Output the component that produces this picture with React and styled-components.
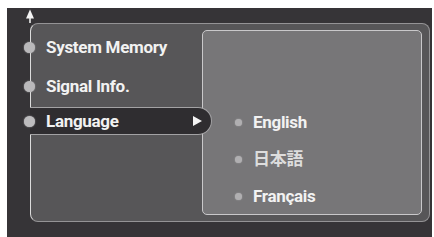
import React from "react";
import styled, { createGlobalStyle } from "styled-components";

const Global = createGlobalStyle`
  html, body { margin: 0; padding: 0; background: #ffffff; }
  body { width: 434px; height: 237px; overflow: hidden; }
`;

const Frame = styled.div`
  margin: 8px 0 0 7px;
  width: 425px;
  height: 229px;
  background: #363437;
  display: flex;
  flex-direction: column;
  font-family: Roboto, "Noto Sans CJK JP", sans-serif;
  font-weight: 700;
  color: #f2f2f2;
`;

const ArrowRow = styled.div`
  height: 15px;
  padding-left: 18px;
  display: flex;
  align-items: flex-end;
`;

const OuterPanel = styled.div`
  box-sizing: border-box;
  margin-left: 23px;
  width: 400px;
  height: 199px;
  background: #575658;
  border: 1px solid #949395;
  border-left-color: #dcdcdc;
  border-radius: 8px;
  padding: 6px 7px 6px 0;
  display: flex;
`;

const LeftColumn = styled.div`
  width: 171px;
  margin-top: -6px;
  display: flex;
  flex-direction: column;
`;

const UpperList = styled.div`
  height: 83px;
  padding-top: 4px;
  box-sizing: border-box;
`;

const LeftRow = styled.div`
  height: 39px;
  display: flex;
  align-items: center;
  margin-left: -7px;
`;

const Dot = styled.span`
  width: ${(p) => p.$size}px;
  height: ${(p) => p.$size}px;
  border-radius: 50%;
  background: ${(p) => p.$color};
  box-shadow: 0 0 1.5px ${(p) => p.$color};
  flex: none;
`;

const Label = styled.span`
  font-size: 17px;
  letter-spacing: -0.3px;
  margin-left: ${(p) => p.$gap}px;
  line-height: 1;
  color: ${(p) => p.$color || "#f2f2f2"};
  font-weight: ${(p) => p.$weight || 700};
`;

const SelectedRow = styled.div`
  position: relative;
  z-index: 1;
  box-sizing: border-box;
  height: 28px;
  margin-left: -1px;
  margin-right: -10px;
  background: #2f2d30;
  border: 1px solid #a3a2a4;
  border-left: none;
  border-radius: 0 14px 14px 0;
  display: flex;
  align-items: center;
  padding-right: 9px;
`;

const SelectedDot = styled.span`
  margin-left: -6px;
  display: flex;
`;

const Spacer = styled.div`
  flex: 1;
`;

const PlayMark = styled.svg`
  width: 9px;
  height: 10px;
  flex: none;
`;

const InnerPanel = styled.div`
  box-sizing: border-box;
  width: 220px;
  height: 185px;
  background: #777678;
  border: 1.5px solid #c9c8ca;
  border-radius: 5px;
  padding-top: 73px;
`;

const RightRow = styled.div`
  height: 37px;
  display: flex;
  align-items: center;
  padding-left: 32px;
`;

const TopArrow = () => (
  <svg width="10" height="14" viewBox="0 0 10 14">
    <polygon points="5,0.5 9,9.5 1,9.5" fill="#f4f4f4" />
    <rect x="4.2" y="9" width="1.6" height="5" fill="#ececec" />
  </svg>
);

const leftItems = ["System Memory", "Signal Info."];
const languages = [
  { label: "English" },
  { label: "日本語", color: "#dddddd", weight: 700 },
  { label: "Français" },
];

export default function App() {
  return (
    <>
      <Global />
      <Frame>
        <ArrowRow>
          <TopArrow />
        </ArrowRow>
        <OuterPanel>
          <LeftColumn>
            <UpperList>
              {leftItems.map((t) => (
                <LeftRow key={t}>
                  <Dot $size={11} $color="#b9b8ba" />
                  <Label $gap={11}>{t}</Label>
                </LeftRow>
              ))}
            </UpperList>
            <SelectedRow>
              <SelectedDot>
                <Dot $size={11} $color="#bdbcbe" />
              </SelectedDot>
              <Label $gap={11}>Language</Label>
              <Spacer />
              <PlayMark viewBox="0 0 9 10">
                <polygon points="0,0 9,5 0,10" fill="#f4f4f4" />
              </PlayMark>
            </SelectedRow>
          </LeftColumn>
          <InnerPanel>
            {languages.map((l) => (
              <RightRow key={l.label}>
                <Dot $size={7} $color="#b0afb1" />
                <Label $gap={11} $color={l.color} $weight={l.weight}>
                  {l.label}
                </Label>
              </RightRow>
            ))}
          </InnerPanel>
        </OuterPanel>
      </Frame>
    </>
  );
}
